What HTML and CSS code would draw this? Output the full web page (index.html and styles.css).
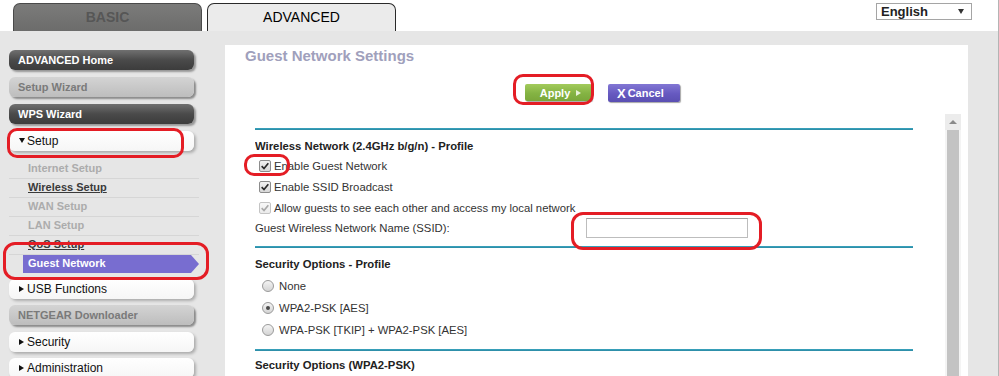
FILE: index.html
```html
<!DOCTYPE html>
<html>
<head>
<meta charset="utf-8">
<link rel="stylesheet" href="styles.css">
</head>
<body>
<div class="page">
  <div class="header">
    <div class="tabs">
      <div class="tab tab-basic">BASIC</div>
      <div class="tab tab-adv">ADVANCED</div>
    </div>
    <div class="lang"><span>English</span><span class="lang-arrow"></span></div>
  </div>
  <div class="body">
    <div class="sidebar">
      <div class="nav nav-dark">ADVANCED Home</div>
      <div class="nav nav-light">Setup Wizard</div>
      <div class="nav nav-dark">WPS Wizard</div>
      <div class="nav nav-white nav-open"><span class="tri-down"></span>Setup</div>
      <div class="sub">
        <div class="sub-item">Internet Setup</div>
        <div class="sub-item link">Wireless Setup</div>
        <div class="sub-item">WAN Setup</div>
        <div class="sub-item">LAN Setup</div>
        <div class="sub-item link">QoS Setup</div>
        <div class="sub-active">Guest Network</div>
      </div>
      <div class="nav nav-white"><span class="tri-right"></span>USB Functions</div>
      <div class="nav nav-light">NETGEAR Downloader</div>
      <div class="nav nav-white"><span class="tri-right"></span>Security</div>
      <div class="nav nav-white"><span class="tri-right"></span>Administration</div>
    </div>
    <div class="main">
      <div class="title">Guest Network Settings</div>
      <div class="actions">
        <div class="btn btn-apply">Apply<span class="apply-tri"></span></div>
        <div class="btn btn-cancel"><span class="x">X</span>Cancel</div>
      </div>
      <div class="scroll">
        <div class="content">
          <div class="rule"></div>
          <div class="heading">Wireless Network (2.4GHz b/g/n) - Profile</div>
          <div class="row cb-row r20"><span class="cb"><svg viewBox="0 0 12 12" width="10" height="10"><path d="M2 6.2 L4.8 9 L10 2.6" fill="none" stroke="#2a2a2a" stroke-width="2"/></svg></span>Enable Guest Network</div>
          <div class="row cb-row r21"><span class="cb"><svg viewBox="0 0 12 12" width="10" height="10"><path d="M2 6.2 L4.8 9 L10 2.6" fill="none" stroke="#2a2a2a" stroke-width="2"/></svg></span>Enable SSID Broadcast</div>
          <div class="row cb-row r21"><span class="cb cb-dis"><svg viewBox="0 0 12 12" width="10" height="10"><path d="M2 6.2 L4.8 9 L10 2.6" fill="none" stroke="#a8a8a8" stroke-width="2"/></svg></span>Allow guests to see each other and access my local network</div>
          <div class="row ssid-row r20"><span class="ssid-label">Guest Wireless Network Name (SSID):</span><span class="ssid-input"></span></div>
          <div class="rule rule2"></div>
          <div class="heading">Security Options - Profile</div>
          <div class="row rd-row rd-first"><span class="rd"></span>None</div>
          <div class="row rd-row"><span class="rd rd-on"></span>WPA2-PSK [AES]</div>
          <div class="row rd-row"><span class="rd"></span>WPA-PSK [TKIP] + WPA2-PSK [AES]</div>
          <div class="rule rule3"></div>
          <div class="heading heading3">Security Options (WPA2-PSK)</div>
        </div>
        <div class="scrollbar">
          <div class="sb-up"><span class="sb-tri"></span></div>
          <div class="sb-thumb"></div>
        </div>
      </div>
    </div>
  </div>
</div>
<div class="mark mark-apply"></div>
<div class="mark mark-setup"></div>
<div class="mark mark-cb"></div>
<div class="mark mark-input"></div>
<div class="mark mark-guest"></div>
</body>
</html>
```
FILE: styles.css
```css
html, body {
  margin: 0;
  padding: 0;
}
body {
  width: 998px;
  height: 376px;
  border-right: 1px solid #b4b4b4;
  overflow: hidden;
  position: relative;
  font-family: "Liberation Sans", Arial, sans-serif;
  background: #fff;
}
.page {
  display: flex;
  flex-direction: column;
  height: 376px;
}
.header {
  height: 31px;
  display: flex;
  align-items: flex-end;
  background: #fff;
}
.tabs {
  display: flex;
  gap: 5px;
  margin-left: 13px;
}
.tab {
  width: 189px;
  height: 28px;
  box-sizing: border-box;
  border-radius: 7px 7px 0 0;
  text-align: center;
  line-height: 27px;
  font-size: 14px;
}
.tab-basic {
  background: linear-gradient(#7b7b7a, #6c6c6b);
  border: 1px solid #4a4a4a;
  border-bottom: none;
  color: #565656;
  font-weight: bold;
}
.tab-adv {
  background: #ebebeb;
  border: 1px solid #2a2a2a;
  border-bottom: none;
  color: #000;
}
.lang {
  align-self: flex-start;
  margin: 3px 26px 0 auto;
  width: 96px;
  height: 17px;
  box-sizing: border-box;
  border: 1px solid #a5a5a5;
  display: flex;
  align-items: center;
  justify-content: space-between;
  padding: 0 7px 0 4px;
  font-size: 13px;
  font-weight: bold;
  color: #222;
}
.lang-arrow {
  width: 0;
  height: 0;
  border-left: 3px solid transparent;
  border-right: 3px solid transparent;
  border-top: 5px solid #333;
}
.body {
  flex: 1;
  display: flex;
  background: #e6e6e6;
  min-height: 0;
}
.sidebar {
  width: 191px;
  margin-left: 9px;
  padding-top: 19px;
}
.nav {
  width: 185px;
  height: 20px;
  box-sizing: border-box;
  border-radius: 6px;
  line-height: 20px;
  padding-left: 9px;
  margin-bottom: 7px;
  font-size: 11px;
  font-weight: bold;
  white-space: nowrap;
  box-shadow: 2px 2px 2px rgba(0, 0, 0, 0.35);
}
.nav-dark {
  background: linear-gradient(#707070, #4a4a4a 50%, #3c3c3c);
  color: #fff;
}
.nav-light {
  background: linear-gradient(#d4d4d4, #bdbdbd);
  color: #7a7a7a;
  box-shadow: 2px 2px 2px rgba(0, 0, 0, 0.4);
}
.nav-white {
  background: linear-gradient(#ffffff, #f6f6f6);
  color: #111;
  font-weight: normal;
  font-size: 12px;
  padding-left: 10px;
  box-shadow: 2px 2px 3px rgba(0, 0, 0, 0.25);
  margin-bottom: 6px;
}
.nav-open {
  margin-bottom: 9px;
}
.tri-down {
  display: inline-block;
  width: 0;
  height: 0;
  border-left: 3px solid transparent;
  border-right: 3px solid transparent;
  border-top: 5px solid #111;
  margin-right: 2px;
  vertical-align: 2px;
}
.tri-right {
  display: inline-block;
  width: 0;
  height: 0;
  border-top: 3px solid transparent;
  border-bottom: 3px solid transparent;
  border-left: 5px solid #111;
  margin-right: 3px;
  vertical-align: 1px;
}
.sub {
  width: 190px;
  margin-bottom: 6px;
}
.sub-item {
  height: 18px;
  line-height: 16px;
  border-bottom: 1px solid #d6d6d6;
  padding-left: 19px;
  font-size: 11px;
  font-weight: bold;
  color: #acacac;
}
.sub-item.link {
  color: #3a3a3a;
  text-decoration: underline;
}
.sub-active {
  margin-left: 14px;
  width: 176px;
  height: 18px;
  line-height: 17px;
  box-sizing: border-box;
  padding-left: 5px;
  background: #786dd0;
  color: #fff;
  font-size: 11px;
  font-weight: bold;
  clip-path: polygon(0 0, 168px 0, 176px 50%, 168px 100%, 0 100%);
}
.main {
  width: 743px;
  margin: 14px 0 0 25px;
  background: #fff;
  display: flex;
  flex-direction: column;
  min-height: 0;
}
.title {
  padding: 3px 0 0 20px;
  height: 16px;
  line-height: 16px;
  font-size: 15px;
  font-weight: bold;
  color: #a0a0bc;
}
.actions {
  display: flex;
  justify-content: center;
  align-items: flex-start;
  gap: 16px;
  margin-top: 20px;
  padding-left: 12px;
  height: 18px;
}
.btn {
  height: 17px;
  box-sizing: border-box;
  border-radius: 2px;
  color: #fff;
  font-size: 11px;
  font-weight: bold;
  display: flex;
  align-items: center;
  justify-content: center;
  box-shadow: 1px 1px 1px rgba(0, 0, 0, 0.35);
}
.btn-apply {
  width: 67px;
  background: linear-gradient(#a3cb5c, #84b343 55%, #7aa73a);
  padding-left: 4px;
}
.apply-tri {
  display: inline-block;
  width: 0;
  height: 0;
  border-top: 3px solid transparent;
  border-bottom: 3px solid transparent;
  border-left: 5px solid #e8f2d8;
  margin-left: 6px;
}
.btn-cancel {
  width: 72px;
  height: 18px;
  background: linear-gradient(#8277d4, #6659c0 55%, #5a4fb2);
  justify-content: flex-start;
  padding-left: 9px;
}
.btn-cancel .x {
  font-size: 13px;
  margin-right: 2px;
}
.scroll {
  display: flex;
  margin: 12px 0 0 30px;
  flex: 1;
  min-height: 0;
  overflow: hidden;
}
.content {
  width: 658px;
  padding-top: 14px;
  font-size: 11.3px;
  color: #333;
}
.rule {
  height: 2px;
  background: linear-gradient(#3ba6c0, #2a88a2);
}
.rule2 {
  margin-top: 8px;
}
.rule3 {
  margin-top: 8px;
}
.heading {
  margin-top: 6px;
  height: 20px;
  line-height: 20px;
  font-weight: bold;
  color: #222;
}
.heading3 {
  margin-top: 4px;
}
.row {
  display: flex;
  align-items: center;
}
.r20 {
  height: 20px;
}
.r21 {
  height: 21px;
}
.cb-row {
  padding-left: 4px;
}
.cb {
  width: 12px;
  height: 12px;
  box-sizing: border-box;
  border: 1px solid #8c8c8c;
  border-radius: 2px;
  background: linear-gradient(#f2f2f2, #d8d8d8);
  margin-right: 3px;
  display: flex;
  align-items: center;
  justify-content: center;
}
.cb-dis {
  border-color: #c4c4c4;
  background: linear-gradient(#f8f8f8, #ebebeb);
}
.ssid-label {
  width: 331px;
}
.ssid-input {
  width: 162px;
  height: 20px;
  box-sizing: border-box;
  border: 1px solid #bdbdbd;
  border-top-color: #a0a0a0;
  background: #fff;
}
.rd-row {
  height: 22px;
  padding-left: 7px;
}
.rd-first {
  margin-top: 1px;
}
.rd {
  width: 12px;
  height: 12px;
  box-sizing: border-box;
  border: 1px solid #9a9a9a;
  border-radius: 50%;
  background: linear-gradient(#f4f4f4, #d4d4d4);
  margin-right: 5px;
  display: flex;
  align-items: center;
  justify-content: center;
}
.rd-on::after {
  content: "";
  width: 4px;
  height: 4px;
  border-radius: 50%;
  background: #4a4a4a;
}
.scrollbar {
  width: 16px;
  margin-left: 32px;
  display: flex;
  flex-direction: column;
  background: #f4f4f4;
}
.sb-up {
  height: 16px;
  background: #ececec;
  display: flex;
  align-items: center;
  justify-content: center;
}
.sb-tri {
  width: 0;
  height: 0;
  border-left: 4px solid transparent;
  border-right: 4px solid transparent;
  border-bottom: 4px solid #8a8a8a;
}
.sb-thumb {
  flex: 1;
  margin: 0 2px;
  background: #c3c3c3;
}
.mark {
  position: absolute;
  box-sizing: border-box;
  border: 3px solid #e41d25;
  border-radius: 10px;
}
.mark-apply {
  left: 513px;
  top: 74px;
  width: 81px;
  height: 31px;
}
.mark-setup {
  left: 7px;
  top: 128px;
  width: 177px;
  height: 30px;
}
.mark-cb {
  left: 244px;
  top: 154px;
  width: 46px;
  height: 22px;
}
.mark-input {
  left: 571px;
  top: 212px;
  width: 191px;
  height: 38px;
  border-radius: 12px;
}
.mark-guest {
  left: 3px;
  top: 242px;
  width: 206px;
  height: 38px;
  border-radius: 12px;
}
```
